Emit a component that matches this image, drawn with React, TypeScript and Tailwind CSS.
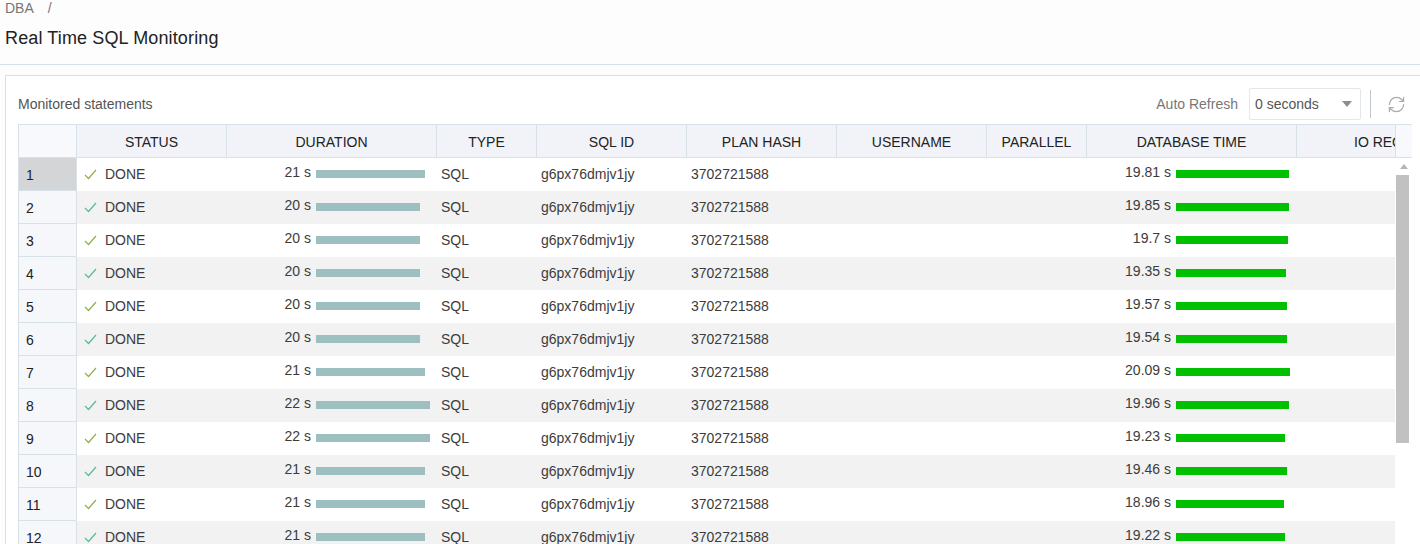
import React from 'react';
import { RefreshCw } from 'lucide-react';

const columns = [
  { label: 'STATUS', width: 'w-[150px]' },
  { label: 'DURATION', width: 'w-[210px]' },
  { label: 'TYPE', width: 'w-[100px]' },
  { label: 'SQL ID', width: 'w-[150px]' },
  { label: 'PLAN HASH', width: 'w-[150px]' },
  { label: 'USERNAME', width: 'w-[150px]' },
  { label: 'PARALLEL', width: 'w-[100px]' },
  { label: 'DATABASE TIME', width: 'w-[210px]' },
];

const rows = [
  { duration: 21, dbTime: '19.81' },
  { duration: 20, dbTime: '19.85' },
  { duration: 20, dbTime: '19.7' },
  { duration: 20, dbTime: '19.35' },
  { duration: 20, dbTime: '19.57' },
  { duration: 20, dbTime: '19.54' },
  { duration: 21, dbTime: '20.09' },
  { duration: 22, dbTime: '19.96' },
  { duration: 22, dbTime: '19.23' },
  { duration: 21, dbTime: '19.46' },
  { duration: 21, dbTime: '18.96' },
  { duration: 21, dbTime: '19.22' },
];

function BarCell({ value, unit, barWidth, color, width }: { value: string; unit: string; barWidth: number; color: string; width: string }) {
  return (
    <div className={`${width} shrink-0 flex items-center`}>
      <span className="w-[84px] text-right pb-[4px] shrink-0">{value} {unit}</span>
      <div className={`ml-[5px] mb-[1px] h-[8px] ${color}`} style={{ width: barWidth }} />
    </div>
  );
}

export default function App() {
  return (
    <div className="h-[544px] w-[1420px] overflow-hidden bg-[#fdfdfe] text-[14px] text-[#3c3c3c] font-['Liberation_Sans',Arial,sans-serif]">
      {/* Page header */}
      <div className="h-[65px] border-b border-[#d9e1e8] pl-[5px]">
        <div className="flex h-[16px] items-center text-[#777]">
          <span>DBA</span>
          <span className="ml-[14px]">/</span>
        </div>
        <h1 className="mt-[11px] text-[18px] leading-[22px] tracking-[0.13px] text-[#222]">Real Time SQL Monitoring</h1>
      </div>

      {/* Card */}
      <div className="ml-[5px] mt-[10px] h-[469px] border-l border-t border-[#d9e1e8] bg-white pl-[12px]">
        <div className="flex h-[48px] items-end justify-between">
          <div className="pb-[11px] text-[#555] leading-[18px]">Monitored statements</div>
          <div className="flex h-[32px] items-center self-end mb-[4px]">
            <span className="text-[#777]">Auto Refresh</span>
            <div className="ml-[11px] flex h-[32px] w-[112px] items-center justify-between rounded-[2px] border border-[#e3e8ec] pl-[5px] pr-[8px] text-[#555]">
              <span>0 seconds</span>
              <span className="h-0 w-0 border-x-[5px] border-t-[6px] border-x-transparent border-t-[#8a8f94]" />
            </div>
            <div className="ml-[9px] h-[28px] w-px bg-[#c4c8cc]" />
            <RefreshCw className="ml-[16px] mr-[14px] h-[19px] w-[19px] text-[#a5abb0]" strokeWidth={1.5} />
          </div>
        </div>

        {/* Table */}
        <div className="w-[1394px] border-l border-t border-r border-[#d9e1e8]">
          <div className="flex h-[33px] border-b border-[#d9e1e8] bg-[#f1f3f8] text-[#222]">
            <div className="w-[58px] shrink-0 border-r border-[#d9e1e8] bg-[#f8f9fd]" />
            {columns.map((c) => (
              <div key={c.label} className={`${c.width} shrink-0 border-r border-[#d9e1e8] flex items-center justify-center pt-[2px]`}>
                {c.label}
              </div>
            ))}
            <div className="w-[98px] shrink-0 overflow-hidden whitespace-nowrap pl-[57px] leading-[35px]">IO REQUESTS</div>
            <div className="w-[17px] shrink-0 border-l border-[#d9e1e8] bg-[#f8f9fd]" />
          </div>

          <div className="flex">
            <div className="w-[1376px] shrink-0">
              {rows.map((r, i) => (
                <div key={i} className={`flex h-[33px] ${i % 2 === 1 ? 'bg-[#f2f2f2]' : 'bg-white'}`}>
                  <div className={`w-[58px] shrink-0 border-r border-b border-[#d9e1e8] pl-[7px] pt-[1px] leading-[33px] text-[#222] ${i === 0 ? 'bg-[#d4d5d7]' : 'bg-[#f5f7fb]'}`}>
                    {i + 1}
                  </div>
                  <div className="w-[150px] shrink-0 flex items-center pl-[7px]">
                    <svg width="13" height="11" viewBox="0 0 13 11" fill="none" className="shrink-0">
                      <path d="M1 6l3.5 3.5L12 1" stroke={i % 2 === 0 ? '#8fb04f' : '#58b8a4'} strokeWidth="1.2" />
                    </svg>
                    <span className="ml-[8px]">DONE</span>
                  </div>
                  <BarCell value={String(r.duration)} unit="s" barWidth={(r.duration - 21) * 5 + 109} color="bg-[#9dbfc0]" width="w-[210px]" />
                  <div className="w-[100px] shrink-0 flex items-center pl-[4px]">SQL</div>
                  <div className="w-[150px] shrink-0 flex items-center pl-[4px]">g6px76dmjv1jy</div>
                  <div className="w-[150px] shrink-0 flex items-center pl-[4px]">3702721588</div>
                  <div className="w-[150px] shrink-0" />
                  <div className="w-[100px] shrink-0" />
                  <BarCell value={r.dbTime} unit="s" barWidth={Math.round(parseFloat(r.dbTime) * 5.68)} color="bg-[#00c000]" width="w-[210px]" />
                </div>
              ))}
            </div>
            {/* Scrollbar */}
            <div className="w-[17px] shrink-0 bg-white pl-[1px]">
              <div className="flex h-[17px] items-center justify-center">
                <span className="h-0 w-0 border-x-[4px] border-b-[5px] border-x-transparent border-b-[#b5b5b5]" />
              </div>
              <div className="h-[268px] w-[13px] bg-[#c1c1c1]" />
            </div>
          </div>
        </div>
      </div>
    </div>
  );
}
